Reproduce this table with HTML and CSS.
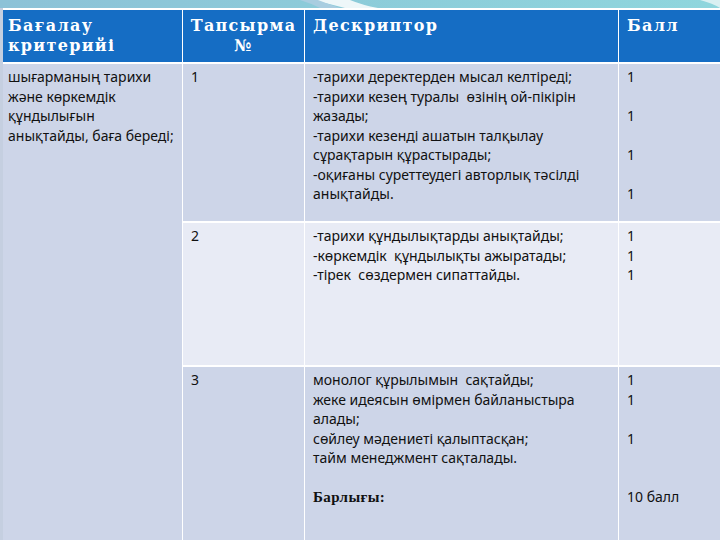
FILE: index.html
```html
<!DOCTYPE html>
<html lang="kk">
<head>
<meta charset="utf-8">
<link rel="stylesheet" href="styles.css">
</head>
<body>
<div class="band">
  <svg class="swoosh" width="720" height="8" viewBox="0 0 720 8" preserveAspectRatio="none">
    <defs>
      <linearGradient id="g" x1="0" x2="1" y1="0" y2="0">
        <stop offset="0" stop-color="#8cc2d7"/>
        <stop offset="0.45" stop-color="#8ccbd9"/>
        <stop offset="1" stop-color="#8fd6dd"/>
      </linearGradient>
    </defs>
    <rect x="0" y="0" width="720" height="8" fill="url(#g)"/>
    <path d="M312 0 L350 0 Q362 5 378 8 L345 8 Q330 4 312 0 Z" fill="#eef7f9"/>
    <path d="M300 0 L318 0 Q328 4 340 8 L320 8 Q310 3 300 0 Z" fill="#a9cde0"/>
    <path d="M700 0 L720 0 L720 8 Q712 3 700 0 Z" fill="#d9f0f2"/>
  </svg>
</div>
<table class="grid">
  <colgroup>
    <col class="c1"><col class="c2"><col class="c3"><col class="c4">
  </colgroup>
  <thead>
    <tr class="head">
      <th>Бағалау<br>критерийі</th>
      <th class="center">Тапсырма<br>№</th>
      <th>Дескриптор</th>
      <th>Балл</th>
    </tr>
  </thead>
  <tbody>
    <tr class="r1">
      <td rowspan="3" class="crit">шығарманың тарихи<br>және көркемдік<br>құндылығын<br>анықтайды, баға береді;</td>
      <td>1</td>
      <td>-тарихи деректерден мысал келтіреді;<br>-тарихи кезең туралы&nbsp; өзінің ой-пікірін<br>жазады;<br>-тарихи кезенді ашатын талқылау<br>сұрақтарын құрастырады;<br>-оқиғаны суреттеудегі авторлық тәсілді<br>анықтайды.</td>
      <td>1<br>&nbsp;<br>1<br>&nbsp;<br>1<br>&nbsp;<br>1</td>
    </tr>
    <tr class="r2">
      <td>2</td>
      <td>-тарихи құндылықтарды анықтайды;<br>-көркемдік&nbsp; құндылықты ажыратады;<br>-тірек&nbsp; сөздермен сипаттайды.</td>
      <td>1<br>1<br>1</td>
    </tr>
    <tr class="r3">
      <td>3</td>
      <td>монолог құрылымын&nbsp; сақтайды;<br>жеке идеясын өмірмен байланыстыра<br>алады;<br>сөйлеу мәдениеті қалыптасқан;<br>тайм менеджмент сақталады.<br>&nbsp;<br><b class="total">Барлығы:</b></td>
      <td>1<br>1<br>&nbsp;<br>1<br>&nbsp;<br>&nbsp;<br>10 балл</td>
    </tr>
  </tbody>
</table>
</body>
</html>
```
FILE: styles.css
```css
html, body {
  margin: 0;
  padding: 0;
  width: 720px;
  height: 540px;
  overflow: hidden;
  background: #cdd5e8;
}
.band {
  height: 8px;
  line-height: 0;
}
.swoosh {
  display: block;
}
.grid {
  width: 720px;
  table-layout: fixed;
  border-collapse: collapse;
  font-family: "Noto Sans", "DejaVu Sans", sans-serif;
  font-size: 14px;
  color: #111111;
}
.c1 { width: 181px; }
.c2 { width: 122px; }
.c3 { width: 314px; }
.c4 { width: 103px; }
.grid th, .grid td {
  border-left: 1px solid #ffffff;
  border-top: 2px solid #ffffff;
  vertical-align: top;
  text-align: left;
  padding: 0 4px 0 8px;
}
.grid th:first-child, .grid td.crit {
  border-left: 3px solid #c5cfe0;
  padding-left: 5px;
}
.head th {
  height: 54px;
  box-sizing: border-box;
  background: #156dc4;
  color: #ffffff;
  font-family: "DejaVu Serif", "Liberation Serif", serif;
  font-weight: bold;
  font-size: 16px;
  line-height: 20px;
  padding-top: 6px;
  letter-spacing: 1.3px;
}
.head th.center {
  text-align: center;
  padding-left: 2px;
  padding-right: 2px;
}
.grid td {
  line-height: 19.5px;
  padding-top: 3px;
}
.r1 td { height: 154px; background: #cdd5e8; }
.r2 td { height: 139px; background: #e8ebf5; }
.r3 td { height: 176px; background: #cdd5e8; }
.grid td.crit {
  background: #cdd5e8;
}
.total {
  font-family: "Liberation Serif", "DejaVu Serif", serif;
  font-weight: bold;
  font-size: 15px;
  letter-spacing: 0.4px;
}
```
